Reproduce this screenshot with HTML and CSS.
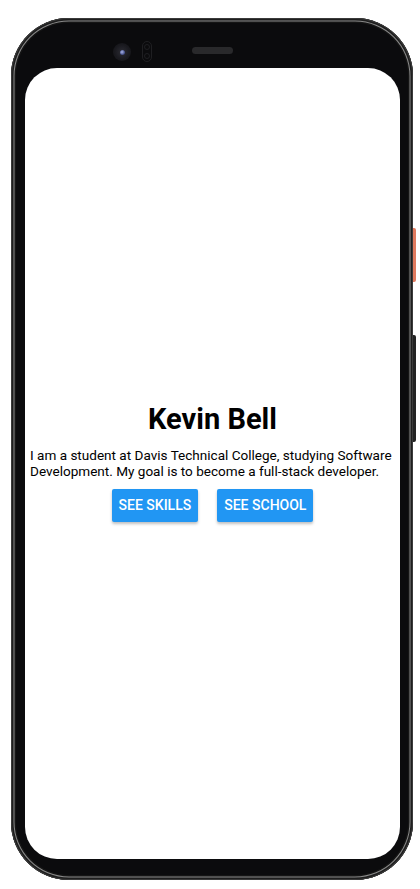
FILE: index.html
```html
<!DOCTYPE html>
<html lang="en">
<head>
<meta charset="utf-8">
<title>Kevin Bell</title>
<link rel="stylesheet" href="styles.css">
</head>
<body>
<div class="phone">
  <span class="side-btn power"></span>
  <span class="side-btn volume"></span>
  <div class="bezel-top">
    <span class="camera"><span class="lens"></span></span>
    <span class="sensor"><span class="dot"></span><span class="dot"></span></span>
    <span class="speaker"></span>
  </div>
  <main class="screen">
    <h1 class="name">Kevin Bell</h1>
    <p class="bio">I am a student at Davis Technical College, studying Software Development. My goal is to become a full-stack developer.</p>
    <div class="actions">
      <button class="btn">See Skills</button>
      <button class="btn">See School</button>
    </div>
  </main>
</div>
</body>
</html>
```
FILE: styles.css
```css
html, body {
  margin: 0;
  padding: 0;
  background: #ffffff;
}
body {
  width: 420px;
  height: 889px;
  overflow: hidden;
  font-family: Roboto, "Liberation Sans", sans-serif;
}
.phone {
  position: relative;
  box-sizing: border-box;
  margin: 18px 0 0 11px;
  width: 402px;
  height: 862px;
  padding: 0 13px 21px 14px;
  border-radius: 58px;
  background: #0b0b0d;
  box-shadow:
    inset 0 0 0 1px #3a3a3a,
    inset 0 0 0 2.5px #1e1e1e,
    inset 0 0 0 3.5px #8a8a8a,
    inset 0 0 0 5px #151515;
  display: flex;
  flex-direction: column;
}
.side-btn {
  position: absolute;
  right: -3px;
  width: 3px;
  border-radius: 0 2px 2px 0;
}
.side-btn.power {
  top: 210px;
  height: 54px;
  background: #e07a5f;
}
.side-btn.volume {
  top: 317px;
  height: 107px;
  background: #232323;
}
.bezel-top {
  height: 50px;
  flex: none;
  display: flex;
  align-items: flex-start;
}
.camera {
  margin: 25px 0 0 88px;
  width: 18px;
  height: 18px;
  border-radius: 50%;
  background: radial-gradient(circle at 50% 50%, #2c2c34 0, #1a1a1f 55%, #111114 100%);
  display: flex;
  align-items: center;
  justify-content: center;
}
.lens {
  width: 5px;
  height: 5px;
  border-radius: 50%;
  background: radial-gradient(circle at 40% 40%, #a9b4e6 0, #4a5590 60%, #20243a 100%);
}
.sensor {
  margin: 23px 0 0 11px;
  box-sizing: border-box;
  width: 10px;
  height: 21px;
  border-radius: 5px;
  border: 1px solid #1f1f22;
  display: flex;
  flex-direction: column;
  align-items: center;
  justify-content: space-around;
}
.dot {
  width: 6px;
  height: 6px;
  border-radius: 50%;
  border: 1px solid #1f1f22;
  box-sizing: border-box;
}
.speaker {
  margin: 29px 0 0 40px;
  width: 41px;
  height: 7px;
  border-radius: 4px;
  background: #29292b;
}
.screen {
  flex: 1;
  background: #ffffff;
  border-radius: 32px;
  display: flex;
  flex-direction: column;
  align-items: center;
  justify-content: center;
  padding-bottom: 4px;
}
.name {
  margin: 0;
  font-size: 29px;
  line-height: 34px;
  font-weight: 700;
  color: #000;
}
.bio {
  margin: 11px 0 0;
  box-sizing: border-box;
  width: 100%;
  padding: 0 0 0 5px;
  font-size: 13.55px;
  line-height: 16px;
  color: #000;
  text-align: left;
}
.actions {
  margin-top: 10px;
  display: flex;
  gap: 19px;
}
.btn {
  height: 33px;
  padding: 0 7px;
  border: 0;
  border-radius: 2px;
  background: #2196f3;
  color: #fff;
  font-family: Roboto, "Liberation Sans", sans-serif;
  font-weight: 500;
  font-size: 14px;
  text-transform: uppercase;
  box-shadow: 0 2px 3px rgba(0,0,0,0.25);
}
```
